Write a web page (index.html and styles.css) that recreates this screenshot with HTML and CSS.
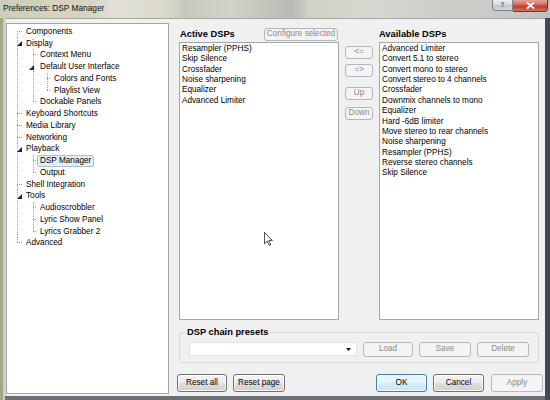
FILE: index.html
```html
<!DOCTYPE html>
<html lang="en">
<head>
<meta charset="utf-8">
<title>Preferences: DSP Manager</title>
<link rel="stylesheet" href="styles.css">
</head>
<body>
<div class="window">
  <header class="titlebar">
    <span class="caption">Preferences: DSP Manager</span>
    <div class="capbtns">
      <span class="cb help">?</span>
      <span class="cb close"><svg width="9" height="7" viewBox="0 0 9 7"><path d="M1.5 1 L7.5 6 M7.5 1 L1.5 6" stroke="#fff" stroke-width="1.7" stroke-linecap="round"/></svg></span>
    </div>
  </header>
  <main class="client">
    <nav class="tree">
      <div class="row"><span class="g g0 f"></span><span class="lbl">Components</span></div>
      <div class="row"><span class="g g0 v"><svg class="exp" viewBox="0 0 5 5"><path d="M5 0V5H0Z"/></svg></span><span class="lbl">Display</span></div>
      <div class="row"><span class="g g0 v"></span><span class="g t"></span><span class="lbl">Context Menu</span></div>
      <div class="row"><span class="g g0 v"></span><span class="g v"><svg class="exp exp1" viewBox="0 0 5 5"><path d="M5 0V5H0Z"/></svg></span><span class="lbl">Default User Interface</span></div>
      <div class="row"><span class="g g0 v"></span><span class="g v"></span><span class="g t"></span><span class="lbl">Colors and Fonts</span></div>
      <div class="row"><span class="g g0 v"></span><span class="g v"></span><span class="g l"></span><span class="lbl">Playlist View</span></div>
      <div class="row"><span class="g g0 v"></span><span class="g l"></span><span class="lbl">Dockable Panels</span></div>
      <div class="row"><span class="g g0 t"></span><span class="lbl">Keyboard Shortcuts</span></div>
      <div class="row"><span class="g g0 t"></span><span class="lbl">Media Library</span></div>
      <div class="row"><span class="g g0 t"></span><span class="lbl">Networking</span></div>
      <div class="row"><span class="g g0 v"><svg class="exp" viewBox="0 0 5 5"><path d="M5 0V5H0Z"/></svg></span><span class="lbl">Playback</span></div>
      <div class="row"><span class="g g0 v"></span><span class="g t"></span><span class="lbl sel">DSP Manager</span></div>
      <div class="row"><span class="g g0 v"></span><span class="g l"></span><span class="lbl">Output</span></div>
      <div class="row"><span class="g g0 t"></span><span class="lbl">Shell Integration</span></div>
      <div class="row"><span class="g g0 v"><svg class="exp" viewBox="0 0 5 5"><path d="M5 0V5H0Z"/></svg></span><span class="lbl">Tools</span></div>
      <div class="row"><span class="g g0 v"></span><span class="g t"></span><span class="lbl">Audioscrobbler</span></div>
      <div class="row"><span class="g g0 v"></span><span class="g t"></span><span class="lbl">Lyric Show Panel</span></div>
      <div class="row"><span class="g g0 v"></span><span class="g l"></span><span class="lbl">Lyrics Grabber 2</span></div>
      <div class="row"><span class="g g0 l"></span><span class="lbl">Advanced</span></div>
    </nav>

    <section class="pane">
      <div class="lists">
        <div class="hdr hdr-active"><span class="h">Active DSPs</span><button class="btn dis cfg">Configure selected</button></div>
        <div></div>
        <div class="hdr"><span class="h">Available DSPs</span></div>

        <ul class="listbox">
          <li>Resampler (PPHS)</li>
          <li>Skip Silence</li>
          <li>Crossfader</li>
          <li>Noise sharpening</li>
          <li>Equalizer</li>
          <li>Advanced Limiter</li>
        </ul>
        <div class="movebtns">
          <button class="btn dis mv mv1">&lt;=</button>
          <button class="btn dis mv mv2">=&gt;</button>
          <button class="btn dis mv mv3">Up</button>
          <button class="btn dis mv mv4">Down</button>
        </div>
        <ul class="listbox">
          <li>Advanced Limiter</li>
          <li>Convert 5.1 to stereo</li>
          <li>Convert mono to stereo</li>
          <li>Convert stereo to 4 channels</li>
          <li>Crossfader</li>
          <li>Downmix channels to mono</li>
          <li>Equalizer</li>
          <li>Hard -6dB limiter</li>
          <li>Move stereo to rear channels</li>
          <li>Noise sharpening</li>
          <li>Resampler (PPHS)</li>
          <li>Reverse stereo channels</li>
          <li>Skip Silence</li>
        </ul>
      </div>

      <fieldset class="presets">
        <legend>DSP chain presets</legend>
        <div class="combo"><svg class="drop" width="5" height="3" viewBox="0 0 5 3"><path d="M0 0H5L2.5 3Z"/></svg></div>
        <button class="btn dis pb pb-load">Load</button>
        <button class="btn dis pb pb-save">Save</button>
        <button class="btn dis pb pb-del">Delete</button>
      </fieldset>

      <div class="footer">
        <button class="btn fb fb-resetall">Reset all</button>
        <button class="btn fb fb-resetpage">Reset page</button>
        <button class="btn fb ok fb-ok">OK</button>
        <button class="btn fb fb-cancel">Cancel</button>
        <button class="btn dis fb fb-apply">Apply</button>
      </div>
    </section>
  </main>
  <svg class="cursor" width="9" height="14" viewBox="0 0 12 19"><path d="M0.5 0.5 L0.5 16 L4.2 12.3 L7 18.3 L9.2 17.3 L6.4 11.4 L11.2 11.4 Z" fill="#fff" stroke="#000" stroke-width="1"/></svg>
</div>
</body>
</html>
```

FILE: styles.css
```css
* { box-sizing: border-box; }
html, body { margin: 0; padding: 0; }
body {
  width: 550px;
  height: 400px;
  overflow: hidden;
  font-family: "Liberation Sans", Arial, sans-serif;
  font-size: 8.2px;
  color: #000;
  background: #5b6269;
}

.window {
  position: relative;
  width: 550px;
  height: 400px;
  display: flex;
  flex-direction: column;
  background:
    linear-gradient(to right, #a2a78b 0 3px, #cdd0be 3px 5px, transparent 5px 545px, #414a54 545px),
    linear-gradient(to bottom, transparent 0 396px, #6a7076 396px);
  background-color: #6a7076;
}

/* ---------- title bar ---------- */
.titlebar {
  flex: none;
  height: 18px;
  display: flex;
  align-items: flex-start;
  background: linear-gradient(to right,
    #cfceba 0, #d5d4c3 90px, #e3e1d6 115px, #dad9cc 165px, #c8c9bd 185px,
    #d2d3c8 230px, #c5c7be 262px, #b8bbb4 292px, #d0d1c9 310px, #d7d7d0 370px,
    #cdcec8 440px, #c9ccc9 490px, #bcc1c2 550px);
}
.caption {
  padding: 2px 0 0 3px;
  font-size: 8.3px;
  line-height: 12px;
  color: #111;
}
.capbtns {
  margin-left: auto;
  margin-right: 2px;
  display: flex;
  align-items: flex-start;
}
.cb {
  display: flex;
  align-items: center;
  justify-content: center;
}
.help {
  width: 21px;
  height: 11px;
  border: 1px solid #7d848c;
  border-top: none;
  border-radius: 0 0 0 4px;
  background: linear-gradient(#eef0f2, #d5d9dd 50%, #c3c8ce 55%, #d4d8dc);
  color: #5a6470;
  font-size: 7px;
  font-weight: bold;
  line-height: 10px;
}
.close {
  width: 35px;
  height: 12px;
  border: 1px solid #70372f;
  border-top: none;
  border-left: none;
  border-radius: 0 0 4px 0;
  background: linear-gradient(#e3a496, #cf6a5a 45%, #c23a28 55%, #d4705e);
}

/* ---------- client ---------- */
.client {
  flex: 1;
  min-height: 0;
  margin: 0 5px 4px 5px;
  background: #f0f0f0;
  border-top: 1px solid #a4a79c;
  border-left: 1px solid #d6d8cc;
  display: flex;
  padding: 4px 0 2px 0;
}

/* ---------- tree ---------- */
.tree {
  --c: #9c9c9c;
  --vd: repeating-linear-gradient(to bottom, var(--c) 0 1px, transparent 1px 2px);
  --hd: repeating-linear-gradient(to right, var(--c) 0 1px, transparent 1px 2px);
  width: 163px;
  flex: none;
  background: #fff;
  border: 1px solid #a2a6ac;
  padding-top: 1.8px;
}
.row {
  display: flex;
  height: 11.76px;
  white-space: nowrap;
}
.g {
  flex: none;
  width: 14px;
  height: 100%;
  --x: 10px;
  background-repeat: no-repeat;
}
.g0 { width: 16px; }
.v {
  background-image: var(--vd);
  background-position: var(--x) 0;
  background-size: 1px 100%;
}
.t {
  background-image: var(--vd), var(--hd);
  background-position: var(--x) 0, var(--x) 5px;
  background-size: 1px 100%, calc(100% - var(--x)) 1px;
}
.l {
  background-image: var(--vd), var(--hd);
  background-position: var(--x) 0, var(--x) 5px;
  background-size: 1px 6px, calc(100% - var(--x)) 1px;
}
.f {
  background-image: var(--vd), var(--hd);
  background-position: var(--x) 5px, var(--x) 5px;
  background-size: 1px 7px, calc(100% - var(--x)) 1px;
}
.exp {
  display: block;
  width: 5px;
  height: 5px;
  margin: 3.5px 0 0 10px;
  fill: #252525;
}
.exp1 { margin-left: 6px; }
.lbl {
  padding: 0 2px;
  border: 1px solid transparent;
  line-height: 9.76px;
  height: 11.76px;
}
.sel {
  background: #e3eef9;
  border-color: #a6c0de;
  border-radius: 2px;
}

/* ---------- right pane ---------- */
.pane {
  width: 366px;
  margin: 3px 0 0 8px;
  display: flex;
  flex-direction: column;
}
.lists {
  display: grid;
  grid-template-columns: 160px 40px 160px;
  grid-template-rows: 16px 278px;
  margin-left: 2px;
}
.hdr {
  display: flex;
  align-items: center;
}
.hdr-active { padding-left: 1px; }
.h {
  font-size: 9.3px;
  font-weight: bold;
  line-height: 11px;
}
.listbox {
  list-style: none;
  margin: 0;
  background: #fff;
  border: 1px solid #a2a6ac;
  padding: 1px 0 0 2px;
}
.listbox li {
  height: 10.37px;
  line-height: 10.37px;
  white-space: nowrap;
}

/* ---------- buttons ---------- */
.btn {
  font-family: inherit;
  font-size: 8.2px;
  color: #000;
  padding: 0;
  margin: 0;
  border: 1px solid #707070;
  border-radius: 3px;
  background: linear-gradient(#f3f3f3 0, #ececec 48%, #dedede 52%, #d0d0d0 100%);
  box-shadow: inset 0 0 0 1px rgba(255,255,255,0.8);
  line-height: 1;
  white-space: nowrap;
}
.btn.dis {
  color: #8a8a8a;
  border-color: #b3b7ba;
  background: #f4f4f4;
  box-shadow: none;
}
.btn.ok {
  border-color: #3c7fb1;
  background: linear-gradient(#eef8fd 0, #e3f3fc 48%, #d3ecfb 52%, #c4e5f9 100%);
}
.cfg {
  margin-left: auto;
  margin-right: 1px;
  width: 74px;
  height: 13px;
}
.movebtns {
  display: flex;
  flex-direction: column;
  align-items: flex-start;
  padding-left: 6px;
}
.mv { width: 28px; height: 13px; }
.mv1 { margin-top: 4px; }
.mv2 { margin-top: 4.5px; }
.mv3 { margin-top: 10.5px; }
.mv4 { margin-top: 7px; }

/* ---------- presets group ---------- */
.presets {
  margin: 6.5px 0 0 2px;
  width: 360px;
  border: 1px solid #d4d8db;
  border-radius: 3px;
  padding: 4.5px 9px 5px 9px;
  display: flex;
  align-items: flex-start;
  min-width: 0;
}
.presets legend {
  margin-left: -4px;
  padding: 0 2px;
  font-size: 9.3px;
  font-weight: bold;
  line-height: 11px;
}
.combo {
  width: 168px;
  height: 14px;
  background: #fff;
  border: 1px solid #e4e4e4;
  display: flex;
  align-items: center;
}
.drop {
  margin-left: auto;
  margin-right: 5px;
  fill: #111;
}
.pb { height: 15px; margin-left: 6px; }
.pb-load { width: 50px; }
.pb-save { width: 52px; }
.pb-del { width: 52px; }

/* ---------- footer ---------- */
.footer {
  display: flex;
  margin-top: 11px;
}
.fb { height: 18px; }
.fb-resetall { width: 50px; }
.fb-resetpage { width: 52px; margin-left: 6px; }
.fb-ok { width: 51px; margin-left: auto; }
.fb-cancel { width: 51px; margin-left: 6px; }
.fb-apply { width: 52px; margin-left: 7px; }

/* ---------- mouse pointer (overlay) ---------- */
.cursor {
  position: absolute;
  left: 264px;
  top: 232px;
}
```
